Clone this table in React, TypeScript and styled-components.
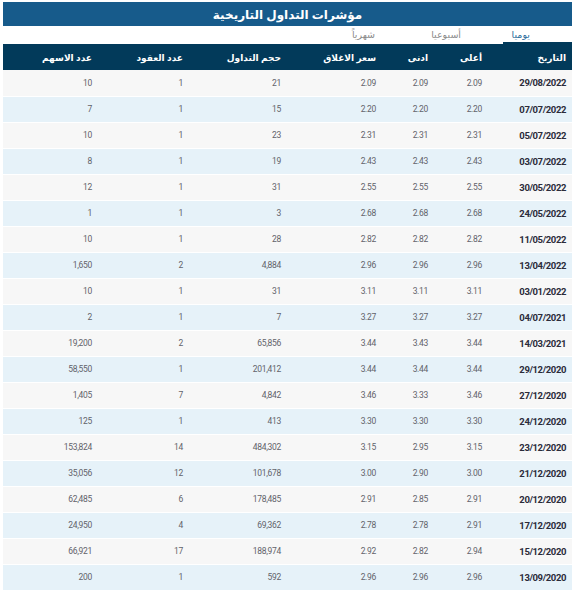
import React from "react";
import styled, { createGlobalStyle } from "styled-components";

const Global = createGlobalStyle`
  html, body { margin: 0; padding: 0; background: #ffffff; }
  body { font-family: "Noto Sans", "DejaVu Sans", sans-serif; }
`;

const Wrapper = styled.div`
  direction: rtl;
  padding: 2px 3px 0 3px;
  width: 569px;
`;

const TitleBar = styled.div`
  height: 24px;
  background: #175b8b;
  color: #ffffff;
  display: flex;
  align-items: center;
  justify-content: center;
  font-size: 12px;
  font-weight: bold;
`;

const Tabs = styled.div`
  display: flex;
  height: 18px;
  background: #ffffff;
`;

const Tab = styled.div<{ $w: number; $pr: number; $active?: boolean }>`
  width: ${(p) => p.$w}px;
  padding-right: ${(p) => p.$pr}px;
  box-sizing: border-box;
  display: flex;
  align-items: center;
  font-size: 9.5px;
  color: ${(p) => (p.$active ? "#2a6c9c" : "#8a8a8a")};
  border-bottom: 2px solid ${(p) => (p.$active ? "#023a5a" : "transparent")};
`;

const Table = styled.table`
  width: 569px;
  border-collapse: collapse;
  table-layout: fixed;
`;

const HeadCell = styled.th<{ $w: number }>`
  box-sizing: border-box;
  width: ${(p) => p.$w}px;
  height: 26px;
  padding: 0 6px 0 0;
  background: #023a5a;
  color: #ffffff;
  font-size: 9px;
  font-weight: bold;
  text-align: right;
`;

const Row = styled.tr<{ $alt: boolean }>`
  background: ${(p) => (p.$alt ? "#e6f2f9" : "#f7f7f7")};
`;

const Cell = styled.td<{ $date?: boolean }>`
  box-sizing: border-box;
  height: 26px;
  padding: 0 6px 0 0;
  border-bottom: 1px solid #ffffff;
  text-align: right;
  font-family: Roboto, "Noto Sans", sans-serif;
  font-size: ${(p) => (p.$date ? "9.5px" : "8.5px")};
  letter-spacing: ${(p) => (p.$date ? "-0.4px" : "-0.3px")};
  font-weight: ${(p) => (p.$date ? "bold" : "normal")};
  color: ${(p) => (p.$date ? "#2b2b3a" : "#62626a")};
`;

const cols: [string, number][] = [
  ["التاريخ", 84],
  ["أعلى", 54],
  ["ادنى", 52],
  ["سعر الاغلاق", 95],
  ["حجم التداول", 98],
  ["عدد العقود", 91],
  ["عدد الاسهم", 95],
];

const rows: string[][] = [
  ["29/08/2022", "2.09", "2.09", "2.09", "21", "1", "10"],
  ["07/07/2022", "2.20", "2.20", "2.20", "15", "1", "7"],
  ["05/07/2022", "2.31", "2.31", "2.31", "23", "1", "10"],
  ["03/07/2022", "2.43", "2.43", "2.43", "19", "1", "8"],
  ["30/05/2022", "2.55", "2.55", "2.55", "31", "1", "12"],
  ["24/05/2022", "2.68", "2.68", "2.68", "3", "1", "1"],
  ["11/05/2022", "2.82", "2.82", "2.82", "28", "1", "10"],
  ["13/04/2022", "2.96", "2.96", "2.96", "4,884", "2", "1,650"],
  ["03/01/2022", "3.11", "3.11", "3.11", "31", "1", "10"],
  ["04/07/2021", "3.27", "3.27", "3.27", "7", "1", "2"],
  ["14/03/2021", "3.44", "3.43", "3.44", "65,856", "2", "19,200"],
  ["29/12/2020", "3.44", "3.44", "3.44", "201,412", "1", "58,550"],
  ["27/12/2020", "3.46", "3.33", "3.46", "4,842", "7", "1,405"],
  ["24/12/2020", "3.30", "3.30", "3.30", "413", "1", "125"],
  ["23/12/2020", "3.15", "2.95", "3.15", "484,302", "14", "153,824"],
  ["21/12/2020", "3.00", "2.90", "3.00", "101,678", "12", "35,056"],
  ["20/12/2020", "2.91", "2.85", "2.91", "178,485", "6", "62,485"],
  ["17/12/2020", "2.91", "2.78", "2.78", "69,362", "4", "24,950"],
  ["15/12/2020", "2.94", "2.82", "2.92", "188,974", "17", "66,921"],
  ["13/09/2020", "2.96", "2.96", "2.96", "592", "1", "200"],
];

export default function App() {
  return (
    <Wrapper>
      <Global />
      <TitleBar>مؤشرات التداول التاريخية</TitleBar>
      <Tabs>
        <Tab $w={69} $pr={42} $active>
          يوميا
        </Tab>
        <Tab $w={78} $pr={42}>
          أسبوعيا
        </Tab>
        <Tab $w={100} $pr={50}>
          شهرياً
        </Tab>
      </Tabs>
      <Table>
        <thead>
          <tr>
            {cols.map(([label, w]) => (
              <HeadCell key={label} $w={w}>
                {label}
              </HeadCell>
            ))}
          </tr>
        </thead>
        <tbody>
          {rows.map((r, i) => (
            <Row key={i} $alt={i % 2 === 1}>
              {r.map((v, j) => (
                <Cell key={j} $date={j === 0}>
                  {v}
                </Cell>
              ))}
            </Row>
          ))}
        </tbody>
      </Table>
    </Wrapper>
  );
}
